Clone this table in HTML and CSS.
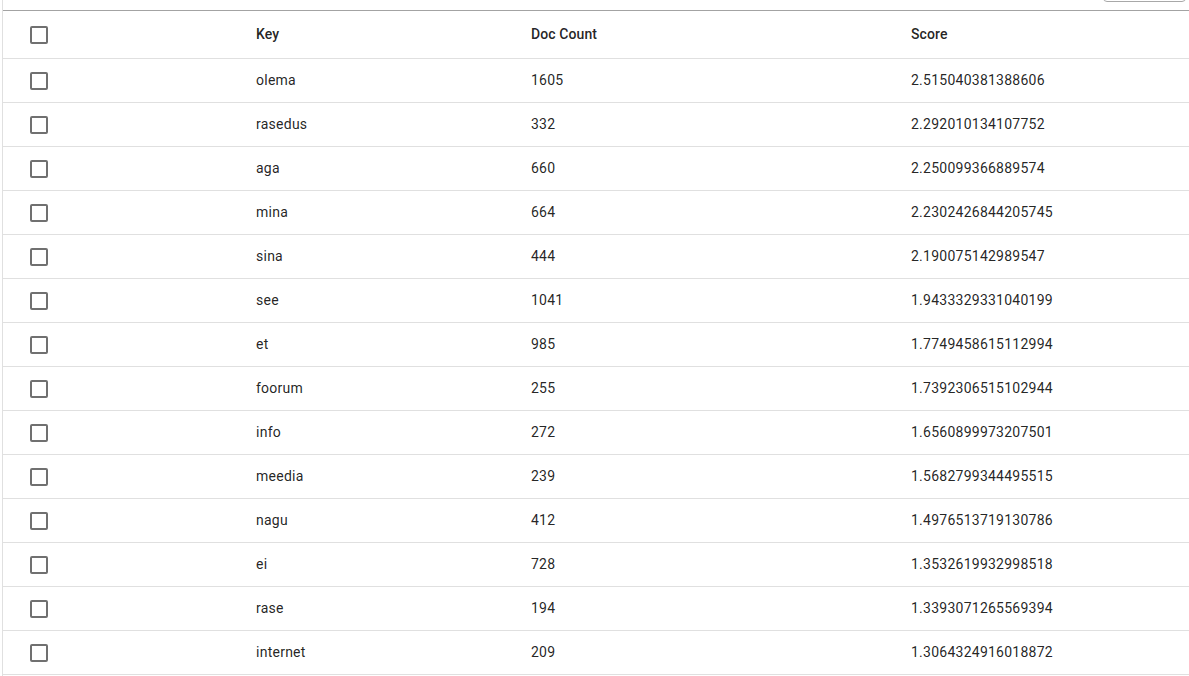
FILE: index.html
```html
<!DOCTYPE html>
<html>
<head>
<meta charset="utf-8">
<link rel="stylesheet" href="styles.css">
</head>
<body>
<div class="page">
  <div class="toolbar"><button class="btn" type="button"></button></div>
  <div class="table">
    <div class="row head">
      <div class="cell chk"><span class="box"></span></div>
      <div class="cell">Key</div>
      <div class="cell">Doc Count</div>
      <div class="cell">Score</div>
    </div>
    <div class="row"><div class="cell chk"><span class="box"></span></div><div class="cell">olema</div><div class="cell">1605</div><div class="cell">2.515040381388606</div></div>
    <div class="row"><div class="cell chk"><span class="box"></span></div><div class="cell">rasedus</div><div class="cell">332</div><div class="cell">2.292010134107752</div></div>
    <div class="row"><div class="cell chk"><span class="box"></span></div><div class="cell">aga</div><div class="cell">660</div><div class="cell">2.250099366889574</div></div>
    <div class="row"><div class="cell chk"><span class="box"></span></div><div class="cell">mina</div><div class="cell">664</div><div class="cell">2.2302426844205745</div></div>
    <div class="row"><div class="cell chk"><span class="box"></span></div><div class="cell">sina</div><div class="cell">444</div><div class="cell">2.190075142989547</div></div>
    <div class="row"><div class="cell chk"><span class="box"></span></div><div class="cell">see</div><div class="cell">1041</div><div class="cell">1.9433329331040199</div></div>
    <div class="row"><div class="cell chk"><span class="box"></span></div><div class="cell">et</div><div class="cell">985</div><div class="cell">1.7749458615112994</div></div>
    <div class="row"><div class="cell chk"><span class="box"></span></div><div class="cell">foorum</div><div class="cell">255</div><div class="cell">1.7392306515102944</div></div>
    <div class="row"><div class="cell chk"><span class="box"></span></div><div class="cell">info</div><div class="cell">272</div><div class="cell">1.6560899973207501</div></div>
    <div class="row"><div class="cell chk"><span class="box"></span></div><div class="cell">meedia</div><div class="cell">239</div><div class="cell">1.5682799344495515</div></div>
    <div class="row"><div class="cell chk"><span class="box"></span></div><div class="cell">nagu</div><div class="cell">412</div><div class="cell">1.4976513719130786</div></div>
    <div class="row"><div class="cell chk"><span class="box"></span></div><div class="cell">ei</div><div class="cell">728</div><div class="cell">1.3532619932998518</div></div>
    <div class="row"><div class="cell chk"><span class="box"></span></div><div class="cell">rase</div><div class="cell">194</div><div class="cell">1.3393071265569394</div></div>
    <div class="row"><div class="cell chk"><span class="box"></span></div><div class="cell">internet</div><div class="cell">209</div><div class="cell">1.3064324916018872</div></div>
  </div>
</div>
</body>
</html>
```
FILE: styles.css
```css
html, body {
  margin: 0;
  padding: 0;
  background: #fff;
}
body {
  font-family: Roboto, "Liberation Sans", sans-serif;
  font-size: 14px;
  color: rgba(0, 0, 0, 0.87);
  overflow: hidden;
}
.page {
  margin-left: 2px;
  border-left: 1px solid #e0e0e0;
  min-height: 676px;
}
.toolbar {
  height: 10px;
  display: flex;
  justify-content: flex-end;
  align-items: flex-end;
  padding-right: 3px;
  overflow: hidden;
}
.btn {
  width: 83px;
  height: 32px;
  margin-bottom: 8px;
  border: 1px solid #a8a8a8;
  border-radius: 4px;
  background: #fff;
  padding: 0;
}
.table {
  border-top: 1px solid #a3a3a3;
}
.row {
  display: grid;
  grid-template-columns: 253px 275px 380px 1fr;
  height: 43px;
  border-bottom: 1px solid #e0e0e0;
  align-items: center;
  letter-spacing: 0.25px;
}
.row.head {
  height: 47px;
  font-weight: 500;
  letter-spacing: 0.1px;
}
.cell {
  white-space: nowrap;
  line-height: 20px;
  padding-bottom: 2px;
}
.chk {
  padding-left: 27px;
  padding-bottom: 0;
  display: flex;
  align-items: center;
}
.box {
  display: block;
  width: 14px;
  height: 14px;
  border: 2px solid #707070;
  border-radius: 2px;
}
```
